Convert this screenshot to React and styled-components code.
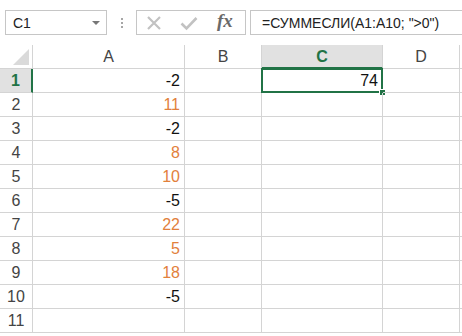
import styled, { createGlobalStyle } from 'styled-components'

const GREEN = '#217346'
const GRID = '#D4D4D4'

const Global = createGlobalStyle`
	body{
		margin: 0;
		background: #FFFFFF;
		font-family: "Liberation Sans", Arial, sans-serif;
		overflow: hidden;
	}
`

const columns = [
	{name: 'A', width: 152},
	{name: 'B', width: 77},
	{name: 'C', width: 121},
	{name: 'D', width: 77},
]

const values = [-2, 11, -2, 8, 10, -5, 22, 5, 18, -5, null]

export default function App(){
	return(<>
		<Global/>
		<Toolbar>
			<NameBox>
				C1
				<Arrow/>
			</NameBox>
			<Grip>
				<i/><i/><i/>
			</Grip>
			<FxButtons>
				<svg width="16" height="16" viewBox="0 0 16 16">
					<path d="M2 2 L14 14 M14 2 L2 14" stroke="#C2C2C2" strokeWidth="2.2" fill="none"/>
				</svg>
				<svg width="18" height="16" viewBox="0 0 18 16">
					<path d="M1.5 8.5 L6.5 13.5 L16.5 3" stroke="#C2C2C2" strokeWidth="2.6" fill="none"/>
				</svg>
				<Fx>fx</Fx>
			</FxButtons>
			<FormulaBox>=СУММЕСЛИ(A1:A10; "&gt;0")</FormulaBox>
		</Toolbar>
		<Sheet>
			<Corner><Triangle/></Corner>
			{columns.map(c=>
				<ColHeader key={c.name} active={c.name==='C'}>{c.name}</ColHeader>
			)}
			<Filler/>
			{values.map((v, i)=>
				<Row key={i}>
					<RowHeader active={i===0}>{i+1}</RowHeader>
					<Cell positive={v>0}>{v}</Cell>
					<Cell/>
					<Cell selected={i===0}>{i===0?74:''}</Cell>
					<Cell/>
					<Filler/>
				</Row>
			)}
		</Sheet>
	</>)
}

const Toolbar = styled.div`
	display: flex;
	align-items: center;
	height: 45px;
	padding-left: 5px;
	box-sizing: border-box;
	overflow: hidden;
	white-space: nowrap;
	& > *{
		flex-shrink: 0;
	}
`

const NameBox = styled.div`
	position: relative;
	width: 102px;
	height: 25px;
	border: 1px solid #C6C6C6;
	box-sizing: border-box;
	display: flex;
	align-items: center;
	padding-left: 7px;
	font-size: 14px;
	color: #222;
`

const Arrow = styled.span`
	position: absolute;
	right: 6px;
	top: 10px;
	border-left: 4px solid transparent;
	border-right: 4px solid transparent;
	border-top: 4px solid #777;
`

const Grip = styled.div`
	display: flex;
	flex-direction: column;
	gap: 2px;
	margin: 0 13px 0 14px;
	i{
		display: block;
		width: 2px;
		height: 2px;
		background: #A6A6A6;
	}
`

const FxButtons = styled.div`
	width: 110px;
	height: 25px;
	border: 1px solid #C6C6C6;
	box-sizing: border-box;
	display: flex;
	align-items: center;
	gap: 18px;
	padding-left: 9px;
`

const Fx = styled.span`
	font-family: "Liberation Serif", "Times New Roman", serif;
	font-style: italic;
	font-weight: bold;
	font-size: 19px;
	color: #6A6A6A;
	margin-top: -3px;
	margin-left: 1px;
`

const FormulaBox = styled.div`
	width: 240px;
	height: 25px;
	margin-left: 4px;
	border: 1px solid #C6C6C6;
	box-sizing: border-box;
	display: flex;
	align-items: center;
	padding-left: 11px;
	font-size: 14px;
	color: #222;
`

const Sheet = styled.div`
	display: grid;
	grid-template-columns: 33px ${columns.map(c=>c.width+'px').join(' ')} 1fr;
	grid-auto-rows: 24px;
`

const Row = styled.div`
	display: contents;
`

const Corner = styled.div`
	position: relative;
	border-right: 1px solid ${GRID};
	border-bottom: 1px solid ${GRID};
`

const Triangle = styled.div`
	position: absolute;
	right: 3px;
	bottom: 3px;
	width: 0;
	height: 0;
	border-left: 16px solid transparent;
	border-bottom: 16px solid #DADADA;
`

const ColHeader = styled.div`
	display: flex;
	align-items: center;
	justify-content: center;
	box-sizing: border-box;
	font-size: 16px;
	border-right: 1px solid ${GRID};
	border-bottom: ${props=>props.active?`2px solid ${GREEN}`:`1px solid ${GRID}`};
	background: ${props=>props.active?'#E1E1E1':'#FFFFFF'};
	color: ${props=>props.active?GREEN:'#444'};
	font-weight: ${props=>props.active?'bold':'normal'};
	padding-top: ${props=>props.active?'1px':'0'};
`

const RowHeader = styled.div`
	display: flex;
	align-items: center;
	justify-content: center;
	box-sizing: border-box;
	font-size: 16px;
	border-right: ${props=>props.active?`2px solid ${GREEN}`:`1px solid ${GRID}`};
	border-bottom: 1px solid ${GRID};
	background: ${props=>props.active?'#E1E1E1':'#FFFFFF'};
	color: ${props=>props.active?GREEN:'#444'};
	font-weight: ${props=>props.active?'bold':'normal'};
`

const Cell = styled.div`
	position: relative;
	display: flex;
	align-items: center;
	justify-content: flex-end;
	padding-right: 4px;
	box-sizing: border-box;
	font-size: 16px;
	color: ${props=>props.positive?'#E2803C':'#111'};
	border-right: 1px solid ${GRID};
	border-bottom: 1px solid ${GRID};
	${props=>props.selected && `
		&::before{
			content: '';
			position: absolute;
			left: -1px;
			top: -1px;
			right: -1px;
			bottom: -1px;
			border: 2px solid ${GREEN};
		}
		&::after{
			content: '';
			position: absolute;
			right: -4px;
			bottom: -4px;
			width: 5px;
			height: 5px;
			background: ${GREEN};
			border: 1px solid #FFFFFF;
		}
	`}
`

const Filler = styled.div`
	border-bottom: 1px solid ${GRID};
`
